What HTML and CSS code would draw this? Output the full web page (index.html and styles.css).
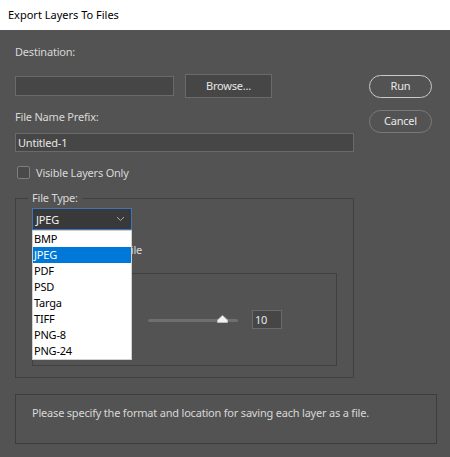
FILE: index.html
```html
<!DOCTYPE html>
<html>
<head>
<meta charset="utf-8">
<link rel="stylesheet" href="styles.css">
</head>
<body>
<div class="titlebar">Export Layers To Files</div>
<div class="dialog">
  <div class="main">
    <div class="left">
      <div class="label first">Destination:</div>
      <div class="dest-row">
        <div class="textbox dest"></div>
        <div class="btn-browse">Browse...</div>
      </div>
      <div class="label prefix-label">File Name Prefix:</div>
      <div class="textbox prefix">Untitled-1</div>
      <div class="check-row">
        <span class="checkbox"></span>
        <span class="check-label">Visible Layers Only</span>
      </div>
      <fieldset class="group">
        <legend>File Type:</legend>
        <div class="select-wrap">
          <div class="select">
            <span>JPEG</span>
            <svg class="chev" width="9" height="6" viewBox="0 0 9 6"><path d="M1 1 L4.5 4.5 L8 1" fill="none" stroke="#a8a8a8" stroke-width="1"/></svg>
          </div>
          <ul class="dropdown">
            <li>BMP</li>
            <li class="sel">JPEG</li>
            <li>PDF</li>
            <li>PSD</li>
            <li>Targa</li>
            <li>TIFF</li>
            <li>PNG-8</li>
            <li>PNG-24</li>
          </ul>
        </div>
        <div class="check-row icc">
          <span class="checkbox"></span>
          <span class="check-label">Include ICC Profile</span>
        </div>
        <div class="options">
          <div class="quality-row">
            <span class="q-label">Quality:</span>
            <div class="slider">
              <div class="track"></div>
              <svg class="thumb" width="11" height="8" viewBox="0 0 11 8"><path d="M0.5 7.5 L0.5 5 L5.5 0.5 L10.5 5 L10.5 7.5 Z" fill="#f2f2f2" stroke="#bdbdbd" stroke-width="1"/></svg>
            </div>
            <div class="textbox qbox">10</div>
          </div>
        </div>
      </fieldset>
    </div>
    <div class="right">
      <div class="pill run">Run</div>
      <div class="pill cancel">Cancel</div>
    </div>
  </div>
  <div class="info">Please specify the format and location for saving each layer as a file.</div>
</div>
</body>
</html>
```

FILE: styles.css
```css
* { box-sizing: border-box; }
html, body {
  margin: 0;
  padding: 0;
  width: 450px;
  height: 457px;
  overflow: hidden;
  background: #535353;
  font-family: "Noto Sans", "Open Sans", sans-serif;
  font-size: 11px;
  letter-spacing: -0.2px;
  color: #d8d8d8;
}
.titlebar {
  height: 30px;
  background: #ffffff;
  color: #000;
  padding-left: 8px;
  line-height: 30px;
  font-size: 11px;
  letter-spacing: 0;
}
.dialog {
  padding: 0 13px 0 15px;
}
.main {
  display: flex;
}
.left {
  width: 339px;
}
.label {
  line-height: 16px;
}
.label.first {
  margin-top: 14px;
}
.dest-row {
  display: flex;
  align-items: center;
  margin-top: 14px;
  height: 24px;
}
.textbox {
  background: #464646;
  border: 1px solid #6a6a6a;
  color: #e6e6e6;
}
.dest {
  width: 159px;
  height: 20px;
}
.btn-browse {
  margin-left: 11px;
  width: 87px;
  height: 24px;
  background: #464646;
  border: 1px solid #6a6a6a;
  color: #e6e6e6;
  text-align: center;
  line-height: 22px;
}
.prefix-label {
  margin-top: 11px;
}
.prefix {
  margin-top: 8px;
  width: 339px;
  height: 19px;
  line-height: 17px;
  padding-left: 2px;
}
.check-row {
  display: flex;
  align-items: center;
  margin-top: 12px;
  height: 16px;
}
.checkbox {
  width: 13px;
  height: 13px;
  border: 1px solid #7e7e7e;
  border-radius: 2px;
  background: #4a4a4a;
  margin-left: 2px;
  flex: none;
}
.check-label {
  margin-left: 6px;
}
.group {
  margin: 10px 0 0 0;
  width: 338px;
  border: 1px solid #404040;
  padding: 2px 16px 11px 16px;
}
.group legend {
  padding: 0 4px;
  margin-left: -4px;
  line-height: 16px;
}
.select-wrap {
  position: relative;
  width: 100px;
}
.select {
  height: 22px;
  width: 100px;
  background: #393939;
  border: 1px solid #3f74b6;
  display: flex;
  align-items: center;
  justify-content: space-between;
  padding: 0 6px 0 3px;
  color: #f0f0f0;
}
.chev { display: block; }
.dropdown {
  position: absolute;
  left: 0;
  top: 22px;
  width: 100px;
  margin: 0;
  padding: 0;
  list-style: none;
  background: #fff;
  border: 1px solid #d0d0d0;
  z-index: 5;
}
.dropdown li {
  height: 16px;
  line-height: 16px;
  color: #000;
  padding-left: 1px;
}
.dropdown li.sel {
  background: #0078d7;
  color: #fff;
}
.check-row.icc {
  margin-top: 11px;
}
.icc .check-label {
  margin-left: 4px;
}
.options {
  margin-top: 16px;
  width: 305px;
  height: 93px;
  border: 1px solid #404040;
  padding-top: 36px;
}
.quality-row {
  display: flex;
  align-items: center;
  height: 19px;
}
.q-label {
  margin-left: 12px;
  width: 103px;
}
.slider {
  position: relative;
  width: 90px;
  height: 19px;
}
.track {
  position: absolute;
  left: 0;
  right: 0;
  top: 9px;
  height: 3px;
  background: #6f6f6f;
  border-radius: 2px;
}
.thumb {
  position: absolute;
  left: 69px;
  top: 5px;
}
.qbox {
  margin-left: 14px;
  width: 30px;
  height: 19px;
  line-height: 17px;
  padding-left: 2px;
}
.right {
  margin-left: 15px;
  padding-top: 45px;
  width: 63px;
}
.pill {
  height: 23px;
  border-radius: 12px;
  text-align: center;
  line-height: 20px;
  color: #e8e8e8;
}
.run {
  border: 1.5px solid #c9c9c9;
}
.cancel {
  margin-top: 12px;
  border: 1px solid #7a7a7a;
}
.info {
  margin-top: 16px;
  width: 422px;
  height: 50px;
  border: 1px solid #3d3d3d;
  padding: 10px 0 0 16px;
  line-height: 16px;
}
```
